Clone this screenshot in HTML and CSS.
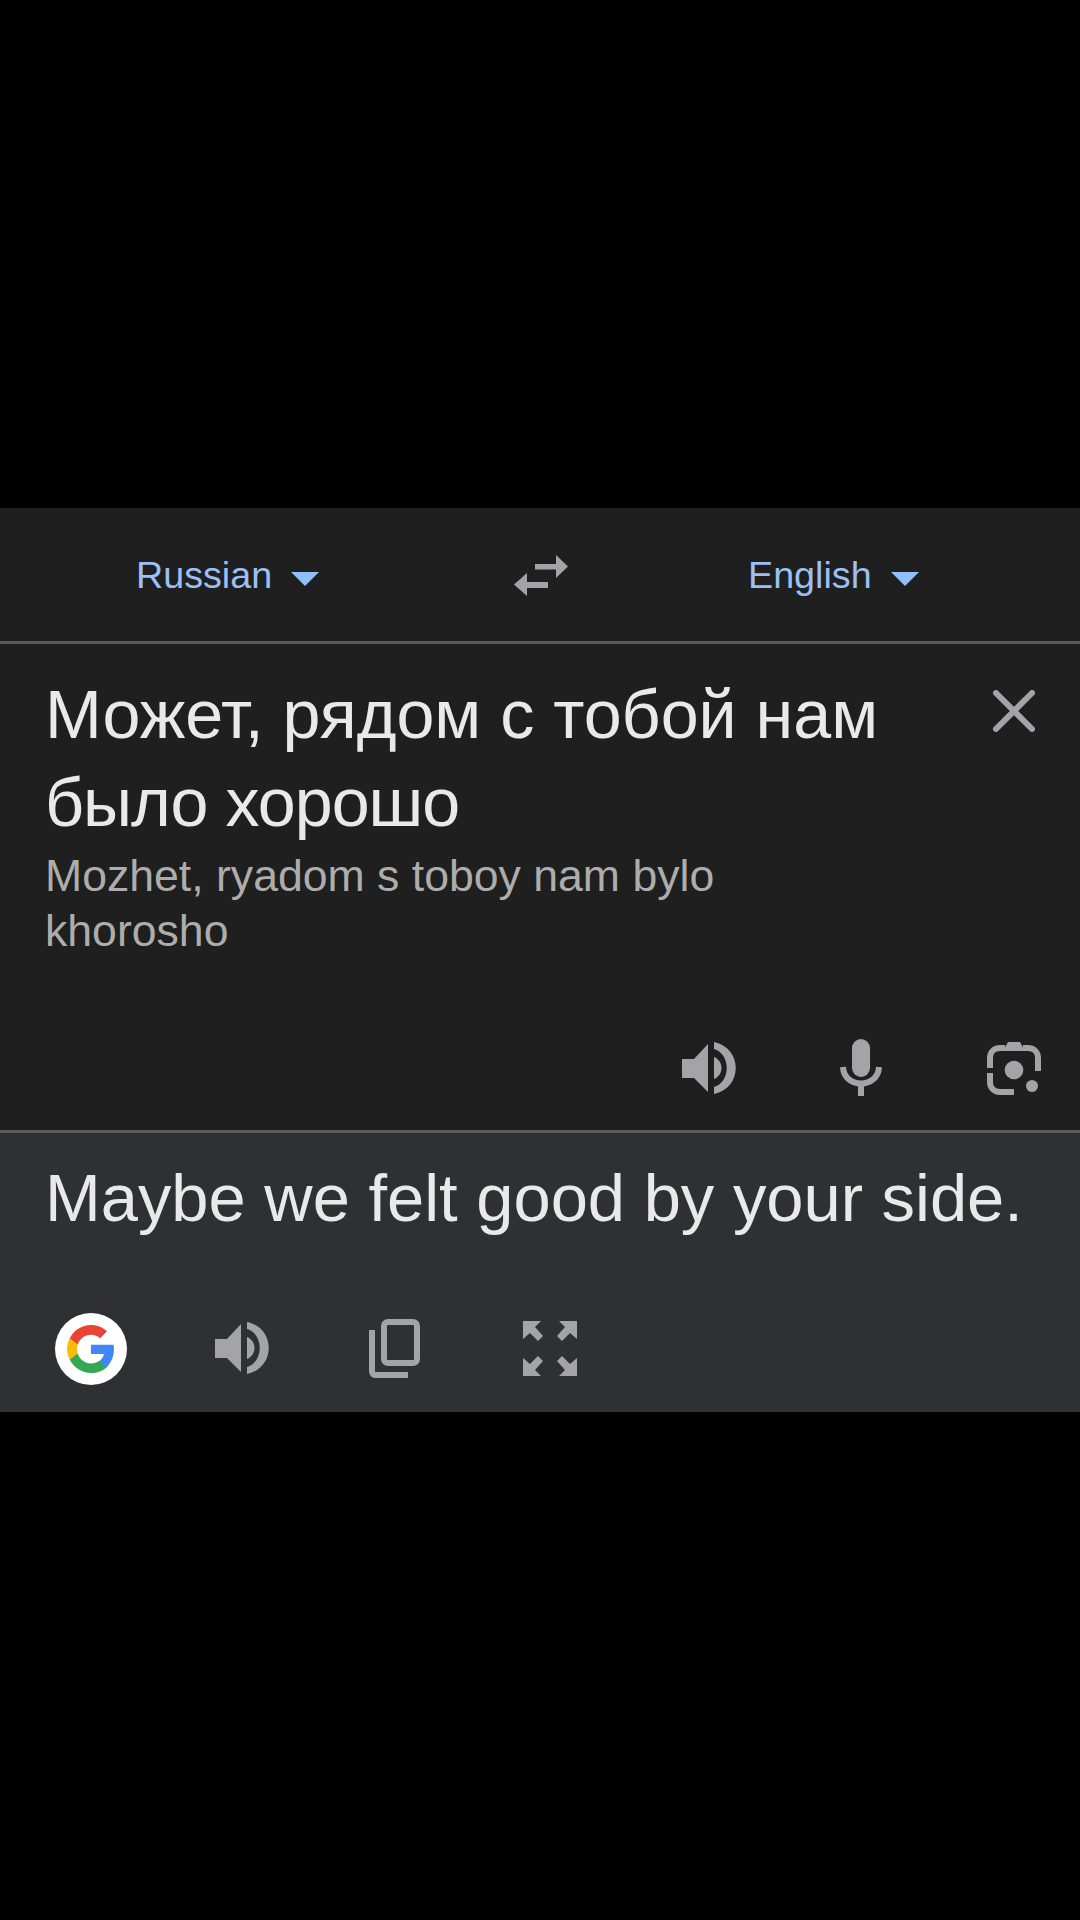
FILE: index.html
```html
<!DOCTYPE html>
<html lang="en">
<head>
<meta charset="utf-8">
<title>Translate</title>
<link rel="stylesheet" href="styles.css">
</head>
<body>
<main class="panel">
  <header class="langbar">
    <div class="lang lang-from"><span>Russian</span><i class="caret"></i></div>
    <svg class="swap" viewBox="0 0 54 41"><path d="M21 9H42V0L54 11.500 42 23V14.500H21z M34 33H13V41L0 29.500 13 18V27H34z" fill="#a3a3a6"/></svg>
    <div class="lang lang-to"><span>English</span><i class="caret"></i></div>
  </header>
  <section class="source">
    <div class="source-top">
      <div class="source-text">
        <p class="original" lang="ru">Может, рядом с тобой нам<br><span class="tight">было хорошо</span></p>
        <p class="translit">Mozhet, ryadom s toboy nam bylo<br>khorosho</p>
      </div>
      <svg class="close" viewBox="0 0 42 42"><path d="M3 3L39 39M39 3L3 39" stroke="#a3a3a8" stroke-width="6" stroke-linecap="round" fill="none"/></svg>
    </div>
    <div class="source-actions">
      <svg class="speaker" viewBox="0 0 55 52"><path d="M0 17H12L26 2V50L12 36H0z" fill="#a3a3a8"/><path d="M32 15C42 19 42 33 32 37z" fill="#a3a3a8"/><path d="M32 0C61 6 61 46 32 52V45C49 40 49 12 32 7z" fill="#a3a3a8"/></svg>
      <svg class="mic" viewBox="0 0 42 57"><rect x="12" y="0" width="18" height="38" rx="9" fill="#a3a3a8"/><path d="M3 28C4 50 38 50 39 28" stroke="#a3a3a8" stroke-width="6" fill="none"/><rect x="18" y="44" width="6" height="13" fill="#a3a3a8"/></svg>
      <svg class="lens" viewBox="0 0 54 54"><path d="M3 27V17C3 11 7 7 13 7H18M36 7H41C47 7 51 11 51 17V30M3 32V41C3 47 7 51 13 51H27" stroke="#a3a3a8" stroke-width="6" fill="none"/><path d="M16 10L21 1H33L38 10z" fill="#a3a3a8"/><circle cx="27" cy="29" r="9.300" fill="#a3a3a8"/><circle cx="45" cy="45" r="6" fill="#a3a3a8"/></svg>
    </div>
  </section>
  <section class="target">
    <p class="translation">Maybe we felt good by your side.</p>
    <div class="target-actions">
      <div class="google">
        <svg viewBox="0 0 48 48"><path fill="#4285f4" d="M46 24.500c0-1.600-.1-3.100-.4-4.500H24v8.900h12.400c-.5 2.900-2.200 5.300-4.600 6.900v5.800h7.400C43.500 36.600 46 31 46 24.500z"/><path fill="#34a853" d="M24 47c6.200 0 11.400-2 15.200-5.600l-7.400-5.800c-2.100 1.400-4.700 2.200-7.800 2.200-6 0-11-4-12.800-9.500H3.600v6C7.400 41.800 15.100 47 24 47z"/><path fill="#fbbc05" d="M11.200 28.300c-.5-1.400-.7-2.800-.7-4.300s.3-2.900.7-4.300v-6H3.600C2.100 16.800 1 20.300 1 24s1.100 7.200 2.600 10.300z"/><path fill="#ea4335" d="M24 10.200c3.400 0 6.400 1.200 8.800 3.400l6.600-6.600C35.400 3.300 30.200 1 24 1 15.100 1 7.400 6.200 3.600 13.700l7.600 6c1.800-5.500 6.800-9.500 12.800-9.500z"/></svg>
      </div>
      <svg class="speaker" viewBox="0 0 55 52"><path d="M0 17H12L26 2V50L12 36H0z" fill="#a3a3a8"/><path d="M32 15C42 19 42 33 32 37z" fill="#a3a3a8"/><path d="M32 0C61 6 61 46 32 52V45C49 40 49 12 32 7z" fill="#a3a3a8"/></svg>
      <svg class="copy" viewBox="0 0 51 59"><rect x="15" y="3" width="33" height="41" rx="4" stroke="#a3a3a8" stroke-width="6" fill="none"/><path d="M3 11V52C3 54 4 56 6 56H39" stroke="#a3a3a8" stroke-width="6" fill="none"/></svg>
      <svg class="expand" viewBox="0 0 54 55"><g fill="#a3a3a8"><path d="M0 0H18L12 6 20 15 15 20 7 12 0 18z"/><path d="M54 0H36L42 6 34 15 39 20 47 12 54 18z"/><path d="M0 55H18L12 49 20 40 15 35 7 43 0 37z"/><path d="M54 55H36L42 49 34 40 39 35 47 43 54 37z"/></g></svg>
    </div>
  </section>
</main>
</body>
</html>
```

FILE: styles.css
```css
* { box-sizing: border-box; }
html, body { margin: 0; background: #000; }
body {
  width: 1080px;
  height: 1920px;
  padding-top: 508px;
  font-family: "Liberation Sans", Arial, sans-serif;
  overflow: hidden;
}
p { margin: 0; }
.panel { display: flex; flex-direction: column; height: 904px; }

.langbar {
  height: 136px;
  background: #1f1f20;
  border-bottom: 3px solid #5a5a5a;
  flex: none;
  display: grid;
  grid-template-columns: 1fr 54px 1fr;
  align-items: center;
}
.lang {
  display: flex;
  align-items: center;
  color: #9cc0f5;
  font-size: 37.700px;
  line-height: 50px;
}
.lang-from { padding-left: 136px; }
.lang-to { padding-left: 181px; }
.caret {
  width: 0;
  height: 0;
  margin: 8px 0 0 19px;
  border-left: 14px solid transparent;
  border-right: 14px solid transparent;
  border-top: 14px solid #8fc0fa;
}
.swap { width: 54px; height: 41px; margin: 1px 0 0 1px; }

.source {
  height: 489px;
  flex: none;
  background: #1f1f20;
  border-bottom: 3px solid #5a5a5a;
  padding: 26px 39px 34px 45px;
  display: flex;
  flex-direction: column;
  justify-content: space-between;
}
.source-top { display: flex; justify-content: space-between; align-items: flex-start; }
.original { font-size: 68.200px; line-height: 88px; color: #e9e9e9; }
.tight { letter-spacing: -1px; }
.translit { font-size: 44.600px; line-height: 55px; color: #adadad; margin-top: 2px; }
.close { width: 42px; height: 42px; margin: 20px 6px 0 0; }
.source-actions { display: flex; justify-content: flex-end; align-items: center; }
.speaker { width: 55px; height: 52px; }
.mic { width: 42px; height: 57px; margin-left: 103px; }
.lens { width: 54px; height: 54px; margin-left: 105px; }

.target {
  flex: 1;
  background: #2f3033;
  padding: 25px 0 0 45px;
}
.translation { font-size: 66.900px; line-height: 80px; color: #e9e9e9; white-space: nowrap; }
.target-actions { display: flex; align-items: center; margin-top: 73px; }
.google {
  width: 72px;
  height: 72px;
  margin: 2px 0 0 10px;
  border-radius: 50%;
  background: #fff;
  display: flex;
  align-items: center;
  justify-content: center;
}
.google svg { width: 50px; height: 50px; }
.target-actions .speaker { margin-left: 88px; }
.copy { width: 51px; height: 59px; margin-left: 99px; }
.expand { width: 54px; height: 55px; margin-left: 103px; }
```
